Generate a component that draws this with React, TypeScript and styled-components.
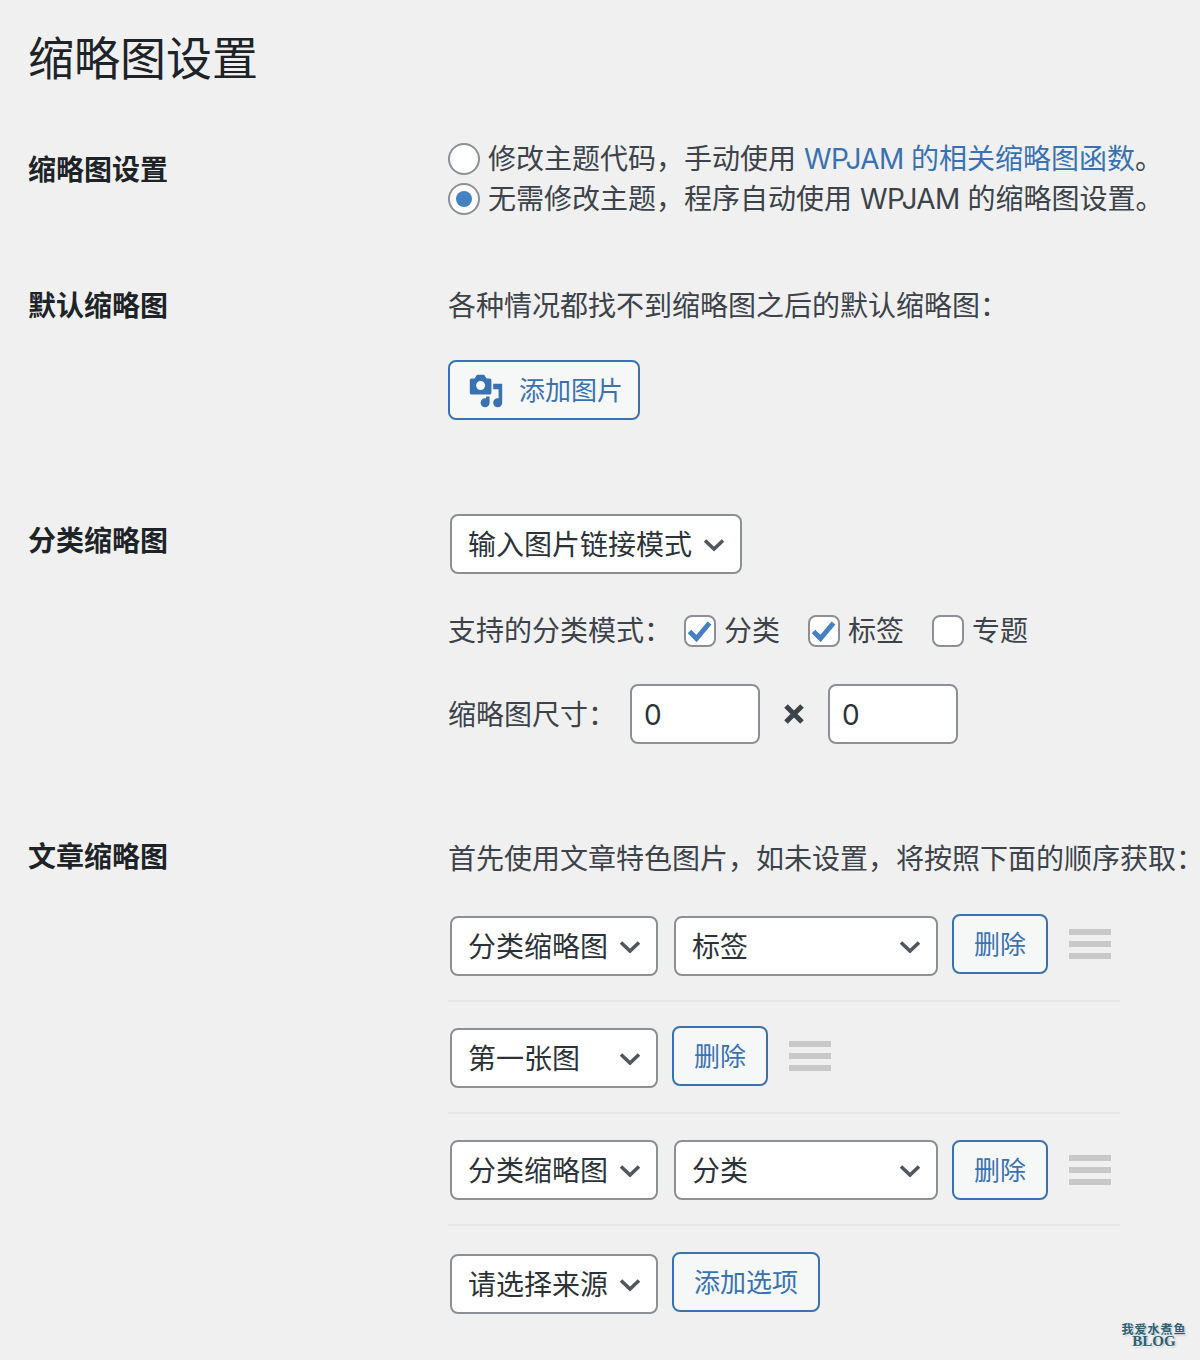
import { FC } from "react";
import styled, { createGlobalStyle } from "styled-components";

const GlobalStyle = createGlobalStyle`
  html, body {
    margin: 0;
    padding: 0;
    background: #f0f0f0;
  }
  body {
    font-family: Inter, "Noto Sans CJK SC", sans-serif;
    color: #3c434a;
    font-size: 28px;
    line-height: 40px;
  }
`;

const Page = styled.div`
  position: relative;
  width: 1200px;
  height: 1360px;
  overflow: hidden;
  padding: 29px 0 0 28px;
  box-sizing: border-box;
`;

const Title = styled.h1`
  margin: 0 0 52px;
  font-size: 46px;
  line-height: 58px;
  font-weight: 400;
  color: #1d2327;
`;

const Row = styled.section<{ $gap: number }>`
  display: grid;
  grid-template-columns: 420px 1fr;
  margin-top: ${(p) => p.$gap}px;
`;

const RowLabel = styled.h2<{ $offset?: number }>`
  margin: ${(p) => p.$offset || 0}px 0 0;
  font-size: 28px;
  line-height: 40px;
  font-weight: 700;
  color: #1d2327;
`;

const Field = styled.div`
  min-width: 0;
  white-space: nowrap;
`;

const Line = styled.div<{ $top?: number }>`
  display: flex;
  align-items: center;
  height: 40px;
  margin-top: ${(p) => p.$top || 0}px;
`;

const Link = styled.a`
  color: #3872b0;
  text-decoration: none;
`;

const Latin = styled.span`
  letter-spacing: -0.6px;
`;

const TightEnd = styled.span`
  letter-spacing: -6px;
`;

const Radio = styled.span<{ $on?: boolean }>`
  display: flex;
  align-items: center;
  justify-content: center;
  flex: none;
  width: 32px;
  height: 32px;
  margin-right: 8px;
  box-sizing: border-box;
  border: 2px solid #8c8f94;
  border-radius: 50%;
  background: #fff;

  &::before {
    content: "";
    display: ${(p) => (p.$on ? "block" : "none")};
    width: 16px;
    height: 16px;
    border-radius: 50%;
    background: #4480c2;
  }
`;

const Check = styled.span`
  display: flex;
  align-items: center;
  justify-content: center;
  flex: none;
  width: 32px;
  height: 32px;
  margin-right: 8px;
  box-sizing: border-box;
  border: 2px solid #8c8f94;
  border-radius: 8px;
  background: #fff;
`;

const CheckLabel = styled.label`
  display: flex;
  align-items: center;
  margin-right: 28px;
`;

const ModeLabel = styled.span`
  width: 236px;
`;

const Button = styled.button<{ $icon?: boolean }>`
  display: inline-flex;
  align-items: center;
  flex: none;
  height: 60px;
  padding: ${(p) => (p.$icon ? "2px 15px 0 18px" : "2px 20px 0")};
  margin-top: ${(p) => (p.$icon ? 34 : 0)}px;
  box-sizing: border-box;
  border: 2px solid #3872b0;
  border-radius: 8px;
  background: #f6f7f7;
  color: #3872b0;
  font-family: inherit;
  font-size: 26px;
  line-height: 40px;
`;

const ButtonIcon = styled.svg`
  width: 36px;
  height: 36px;
  margin-right: 15px;
  fill: currentColor;
`;

const SelectBox = styled.div<{ $width: number; $top?: number }>`
  display: flex;
  align-items: center;
  justify-content: space-between;
  flex: none;
  width: ${(p) => p.$width}px;
  height: 60px;
  margin-top: ${(p) => p.$top || 0}px;
  padding: 2px 15px 0 16px;
  box-sizing: border-box;
  border: 2px solid #8c8f94;
  border-radius: 8px;
  background: #fff;
  color: #2c3338;
`;

const Chevron = styled.svg`
  flex: none;
  width: 22px;
  height: 14px;
  fill: none;
  stroke: #50575e;
  stroke-width: 3.6;
`;

const Indented = styled.div`
  margin: 0 0 0 2px;
  display: flex;
`;

const SizeRow = styled.div`
  display: flex;
  align-items: center;
  margin-top: 33px;
`;

const SizeLabel = styled.span`
  width: 182px;
  padding-top: 2px;
`;

const NumberInput = styled.input`
  width: 130px;
  height: 60px;
  padding: 2px 12px 0;
  box-sizing: border-box;
  border: 2px solid #8c8f94;
  border-radius: 8px;
  background: #fff;
  color: #2c3338;
  font-family: inherit;
  font-size: 28px;
`;

const Times = styled.svg`
  width: 68px;
  height: 24px;
  stroke: #3c434a;
  stroke-width: 5;
`;

const SourceList = styled.div`
  width: 672px;
  margin-top: 35px;
`;

const SourceRow = styled.div<{ $top: number; $divider?: boolean }>`
  display: flex;
  align-items: flex-start;
  margin-top: ${(p) => p.$top}px;
  padding-bottom: ${(p) => (p.$divider ? 24 : 0)}px;
  border-bottom: ${(p) => (p.$divider ? "2px solid #e5e5e5" : "none")};
`;

const SelectPair = styled.div`
  display: flex;
  gap: 16px;
  margin: 0 14px 0 2px;
`;

const Handle = styled.div<{ $top: number }>`
  display: flex;
  flex-direction: column;
  gap: 6px;
  width: 42px;
  margin: ${(p) => p.$top}px 0 0 21px;

  span {
    height: 6px;
    background: #c8c8c8;
  }
`;

const Watermark = styled.div`
  position: absolute;
  right: 13px;
  bottom: 12px;
  width: 66px;
  text-align: center;
  font-weight: 700;
  font-family: "Noto Sans CJK SC", sans-serif;
  color: #2b6070;
  text-shadow: 0 1px 1px #fff, 1px 1px 2px #9ab;
`;

const WatermarkTop = styled.div`
  font-size: 12px;
  line-height: 13px;
  letter-spacing: 1px;
  white-space: nowrap;
`;

const WatermarkBottom = styled.div`
  font-family: "Liberation Serif", serif;
  font-size: 15px;
  line-height: 13px;
`;

const ChevronIcon = () => (
  <Chevron viewBox="0 0 22 14">
    <path d="M2 2.500 11 11 20 2.500" />
  </Chevron>
);

const Select: FC<{ width: number; label: string; top?: number }> = ({ width, label, top }) => (
  <SelectBox $width={width} $top={top}>
    {label}
    <ChevronIcon />
  </SelectBox>
);

const CheckOption: FC<{ label: string; checked?: boolean }> = ({ label, checked }) => (
  <CheckLabel>
    <Check>
      {checked && (
        <svg width="26" height="22" viewBox="0 0 26 22">
          <path d="M2.500 11.500 9.500 18.500 22.500 3" fill="none" stroke="#4480c2" strokeWidth="5" />
        </svg>
      )}
    </Check>
    {label}
  </CheckLabel>
);

const sources = [
  { selects: [["分类缩略图", 208], ["标签", 264]], top: 0, selectTop: 2, handleTop: 15, divider: true },
  { selects: [["第一张图", 208]], top: 24, selectTop: 2, handleTop: 15, divider: true },
  { selects: [["分类缩略图", 208], ["分类", 264]], top: 26, selectTop: 0, handleTop: 15, divider: true },
] as const;

function App() {
  return (
    <Page>
      <GlobalStyle />
      <Title>缩略图设置</Title>

      <Row $gap={0}>
        <RowLabel $offset={11}>缩略图设置</RowLabel>
        <Field>
          <Line>
            <Radio />
            修改主题代码，手动使用&nbsp;<Link><Latin>WPJAM </Latin>的相关缩略图函数</Link>。
          </Line>
          <Line>
            <Radio $on />
            无需修改主题，程序自动使用&nbsp;<Latin>WPJAM </Latin>&nbsp;的缩略图设置。
          </Line>
        </Field>
      </Row>

      <Row $gap={67}>
        <RowLabel>默认缩略图</RowLabel>
        <Field>
          <Line>各种情况都找不到缩略图之后的默认缩略图：</Line>
          <Button $icon>
            <ButtonIcon viewBox="0 0 20 20">
              <path d="M13 11V4c0-.55-.45-1-1-1h-1.670L9 1H5L3.670 3H2c-.55 0-1 .45-1 1v7c0 .55.45 1 1 1h10c.55 0 1-.45 1-1zM7 4.500c1.380 0 2.500 1.120 2.500 2.500S8.380 9.500 7 9.500 4.500 8.380 4.500 7 5.620 4.500 7 4.500zM14 6h5v10.500c0 1.380-1.120 2.500-2.500 2.500S14 17.880 14 16.500s1.120-2.500 2.500-2.500c.17 0 .34.020.5.050V9h-3V6zm-4 8.050V13h2v3.500c0 1.380-1.120 2.500-2.500 2.500S7 17.880 7 16.500 8.120 14 9.500 14c.17 0 .34.020.5.050z" />
            </ButtonIcon>
            添加图片
          </Button>
        </Field>
      </Row>

      <Row $gap={94}>
        <RowLabel $offset={7}>分类缩略图</RowLabel>
        <Field>
          <Indented>
            <Select width={292} label="输入图片链接模式" />
          </Indented>
          <Line $top={37}>
            <ModeLabel>支持的分类模式：</ModeLabel>
            <CheckOption label="分类" checked />
            <CheckOption label="标签" checked />
            <CheckOption label="专题" />
          </Line>
          <SizeRow>
            <SizeLabel>缩略图尺寸：</SizeLabel>
            <NumberInput readOnly value="0" />
            <Times viewBox="0 0 68 24">
              <path d="M26 4 42 20M42 4 26 20" />
            </Times>
            <NumberInput readOnly value="0" />
          </SizeRow>
        </Field>
      </Row>

      <Row $gap={93}>
        <RowLabel>文章缩略图</RowLabel>
        <Field>
          <Line $top={2}>首先使用文章特色图片，如未设置，将按照下面的顺序获取<TightEnd>：</TightEnd></Line>
          <SourceList>
            {sources.map((s, i) => (
              <SourceRow key={i} $top={s.top} $divider={s.divider}>
                <SelectPair>
                  {s.selects.map(([label, width]) => (
                    <Select key={label} label={label} width={width} top={s.selectTop} />
                  ))}
                </SelectPair>
                <Button>删除</Button>
                <Handle $top={s.handleTop}>
                  <span />
                  <span />
                  <span />
                </Handle>
              </SourceRow>
            ))}
            <SourceRow $top={26}>
              <SelectPair>
                <Select label="请选择来源" width={208} top={2} />
              </SelectPair>
              <Button>添加选项</Button>
            </SourceRow>
          </SourceList>
        </Field>
      </Row>

      <Watermark>
        <WatermarkTop>我爱水煮鱼</WatermarkTop>
        <WatermarkBottom>BLOG</WatermarkBottom>
      </Watermark>
    </Page>
  );
}

export default App;
